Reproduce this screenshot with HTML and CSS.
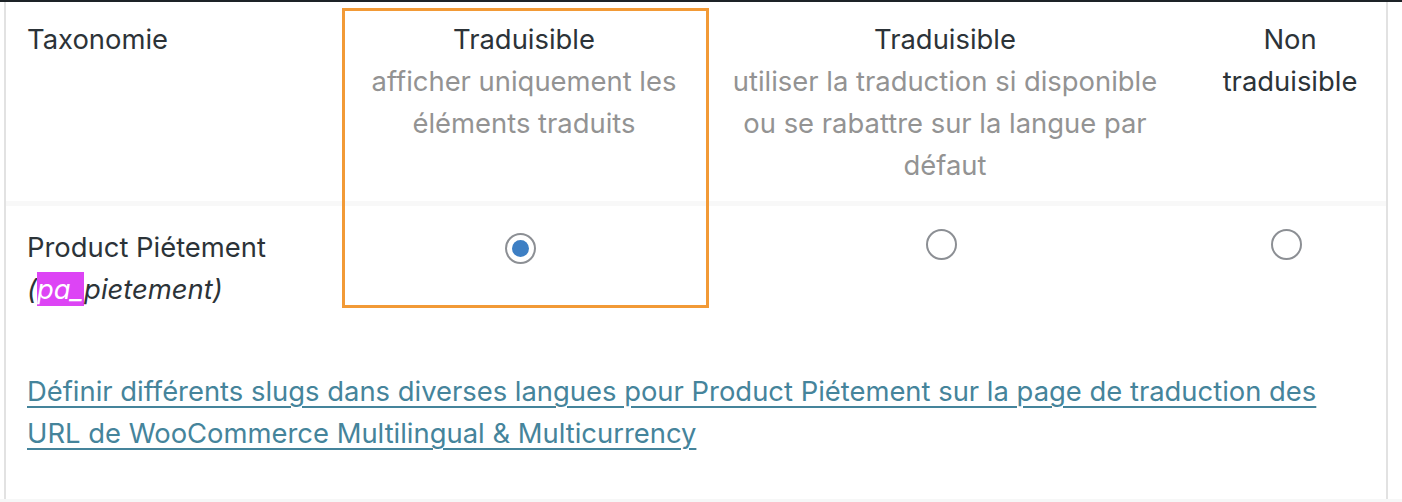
FILE: index.html
```html
<!DOCTYPE html>
<html lang="fr">
<head>
  <meta charset="UTF-8">
  <title>Taxonomies</title>
  <link rel="stylesheet" href="styles.css">
</head>
<body>
  <div class="topbar"></div>
  <div class="panel">
    <table class="tax-table">
      <colgroup>
        <col class="col-name">
        <col class="col-only">
        <col class="col-fallback">
        <col class="col-none">
      </colgroup>
      <thead>
        <tr>
          <th class="name">Taxonomie</th>
          <th class="narrow">Traduisible<span class="desc">afficher uniquement les éléments traduits</span></th>
          <th>Traduisible<span class="desc">utiliser la traduction si disponible ou se rabattre sur la langue par défaut</span></th>
          <th>Non traduisible</th>
        </tr>
      </thead>
      <tbody>
        <tr class="tax-row">
          <td class="name">Product Piétement<br><em>(<mark>pa_</mark>pietement)</em></td>
          <td><input type="radio" name="pa_pietement" value="1" checked></td>
          <td><input type="radio" name="pa_pietement" value="2"></td>
          <td><input type="radio" name="pa_pietement" value="0"></td>
        </tr>
        <tr class="link-row">
          <td colspan="4"><a href="#">Définir différents slugs dans diverses langues pour Product Piétement sur la page de traduction des URL de WooCommerce Multilingual &amp; Multicurrency</a></td>
        </tr>
      </tbody>
    </table>
    <!-- cadre de mise en évidence -->
    <div class="highlight"></div>
  </div>
  <div class="footer"></div>
</body>
</html>
```

FILE: styles.css
```css
* {
  margin: 0;
  padding: 0;
  box-sizing: border-box;
}
body {
  background-color: #ffffff;
  font-family: Inter, "Noto Sans", sans-serif;
  font-size: 27.4px;
  line-height: 42px;
  color: #2c3338;
}
.topbar {
  height: 2px;
  background-color: #1d2327;
}
.panel {
  position: relative;
  margin-left: 4px;
  width: 1384px;
  border-left: 2px solid #e2e2e2;
  border-right: 2px solid #e2e2e2;
}
.tax-table {
  width: 100%;
  border-collapse: collapse;
  table-layout: fixed;
}
.col-name { width: 346px; }
.col-only { width: 344px; }
.col-fallback { width: 498px; }
.col-none { width: 192px; }
th {
  font-weight: normal;
  text-align: center;
  vertical-align: top;
  padding: 16px 20px 15px;
  border-bottom: 2px solid #e0e0e0;
}
th.narrow {
  padding-left: 10px;
  padding-right: 10px;
}
th.name {
  text-align: left;
  padding-left: 21px;
}
.desc {
  display: block;
  color: #939393;
}
.tax-row td {
  vertical-align: top;
  text-align: center;
  padding: 20px 18px 0;
  border-top: 5px solid #f8f8f8;
}
.tax-row td.name {
  text-align: left;
  padding-left: 21px;
}
em mark {
  background-color: #dd44f5;
  color: #ffffff;
  padding: 0 1px 0 0;
}
input[type="radio"] {
  appearance: none;
  width: 31px;
  height: 31px;
  margin: 3px 8px 0 0;
  border: 2px solid #8c8f94;
  border-radius: 50%;
  background-color: #ffffff;
  display: inline-flex;
  align-items: center;
  justify-content: center;
}
input[type="radio"]:checked::before {
  content: "";
  width: 17px;
  height: 17px;
  border-radius: 50%;
  background-color: #3d7fc4;
}
.link-row td {
  padding: 60px 21px 45px;
}
.link-row a {
  color: #45849b;
  text-decoration: underline;
  text-decoration-thickness: 2px;
  text-underline-offset: 5px;
}
.highlight {
  position: absolute;
  left: 336px;
  top: 6px;
  width: 367px;
  height: 300px;
  border: 3px solid #f29a36;
  pointer-events: none;
}
.footer {
  height: 10px;
  background-color: #f6f7f7;
}
```
